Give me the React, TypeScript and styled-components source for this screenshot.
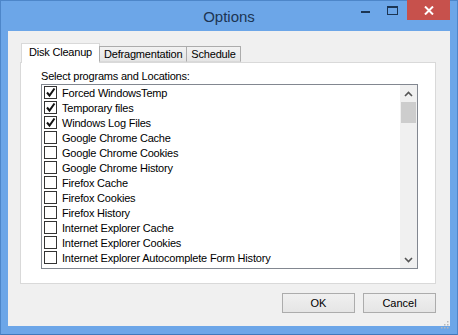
import styled, { createGlobalStyle } from "styled-components";

const GlobalStyle = createGlobalStyle`
  html, body {
    margin: 0;
    padding: 0;
    overflow: hidden;
    background: #6ca6e8;
  }
  * {
    box-sizing: border-box;
  }
`;

const items = [
  { label: "Forced WindowsTemp", checked: true },
  { label: "Temporary files", checked: true },
  { label: "Windows Log Files", checked: true },
  { label: "Google Chrome Cache", checked: false },
  { label: "Google Chrome Cookies", checked: false },
  { label: "Google Chrome History", checked: false },
  { label: "Firefox Cache", checked: false },
  { label: "Firefox Cookies", checked: false },
  { label: "Firefox History", checked: false },
  { label: "Internet Explorer Cache", checked: false },
  { label: "Internet Explorer Cookies", checked: false },
  { label: "Internet Explorer Autocomplete Form History", checked: false },
];

const tabs = ["Disk Cleanup", "Defragmentation", "Schedule"];

const App = () => {
  return (
    <>
      <GlobalStyle />
      <Window>
        <TitleBar>
          <Title>Options</Title>
          <Controls>
            <CtrlButton>
              <svg width="10" height="10" viewBox="0 0 10 10">
                <rect x="0" y="6" width="9" height="2" fill="#1c3553" />
              </svg>
            </CtrlButton>
            <CtrlButton>
              <svg width="11" height="9" viewBox="0 0 11 9">
                <rect x="0.5" y="0.5" width="10" height="8" fill="none" stroke="#1c3553" />
                <rect x="0" y="0" width="11" height="2" fill="#1c3553" />
              </svg>
            </CtrlButton>
            <CloseButton>
              <svg width="10" height="9" viewBox="0 0 10 9">
                <path d="M1 0.5 L9 8.5 M9 0.5 L1 8.5" stroke="#fff" strokeWidth="2" />
              </svg>
            </CloseButton>
          </Controls>
        </TitleBar>
        <Client>
          <TabRow>
            {tabs.map((t, i) => (
              <Tab key={t} active={i === 0}>
                {t}
              </Tab>
            ))}
          </TabRow>
          <Panel>
            <Caption>Select programs and Locations:</Caption>
            <ListBox>
              <Rows>
                {items.map((item) => (
                  <Row key={item.label}>
                    <Check>
                      {item.checked && (
                        <svg width="11" height="11" viewBox="0 0 11 11">
                          <path
                            d="M2 5.5 L4.5 8.5 L9.5 1.5"
                            fill="none"
                            stroke="#111"
                            strokeWidth="2"
                          />
                        </svg>
                      )}
                    </Check>
                    <RowLabel>{item.label}</RowLabel>
                  </Row>
                ))}
              </Rows>
              <ScrollBar>
                <Arrow>
                  <svg width="9" height="6" viewBox="0 0 9 6">
                    <path d="M1 5 L4.5 1.5 L8 5" fill="none" stroke="#555" strokeWidth="1.6" />
                  </svg>
                </Arrow>
                <Track>
                  <Thumb />
                </Track>
                <Arrow>
                  <svg width="9" height="6" viewBox="0 0 9 6">
                    <path d="M1 1 L4.5 4.5 L8 1" fill="none" stroke="#555" strokeWidth="1.6" />
                  </svg>
                </Arrow>
              </ScrollBar>
            </ListBox>
          </Panel>
          <Footer>
            <Button>OK</Button>
            <Button>Cancel</Button>
          </Footer>
          <Grip>
            <svg width="10" height="10" viewBox="0 0 10 10">
              {[
                [8, 2],
                [8, 5],
                [5, 5],
                [8, 8],
                [5, 8],
                [2, 8],
              ].map(([x, y]) => (
                <rect key={`${x}-${y}`} x={x} y={y} width="1.5" height="1.5" fill="#b8b8b8" />
              ))}
            </svg>
          </Grip>
        </Client>
      </Window>
    </>
  );
};

// window frame
const Window = styled.div`
  width: 458px;
  height: 335px;
  background: #6ca6e8;
  border: 1px solid #4d86c9;
  border-bottom-color: #3f78bb;
  padding: 0 7px 8px 7px;
  display: flex;
  flex-direction: column;
  font-family: "Liberation Sans", Arial, sans-serif;
`;

const TitleBar = styled.div`
  position: relative;
  height: 30px;
  display: flex;
  align-items: center;
  justify-content: center;
`;

const Title = styled.div`
  font-size: 15px;
  color: #1c3553;
`;

const Controls = styled.div`
  position: absolute;
  top: -1px;
  right: -8px;
  display: flex;
  align-items: flex-start;
`;

const CtrlButton = styled.div`
  width: 26px;
  height: 20px;
  display: flex;
  align-items: center;
  justify-content: center;
`;

const CloseButton = styled.div`
  width: 43px;
  height: 20px;
  margin-left: 2px;
  margin-right: 8px;
  background: #c7514c;
  display: flex;
  align-items: center;
  justify-content: center;
`;

// client area
const Client = styled.div`
  position: relative;
  flex: 1;
  background: #f0f0f0;
  padding: 12px 14px 0 12px;
  display: flex;
  flex-direction: column;
`;

const TabRow = styled.div`
  display: flex;
  align-items: flex-end;
  height: 19px;
  padding-left: 1px;
  position: relative;
  z-index: 1;
`;

const Tab = styled.div<{ active?: boolean }>`
  height: ${(p) => (p.active ? "20px" : "16px")};
  margin-bottom: ${(p) => (p.active ? "-1px" : "0")};
  padding: ${(p) => (p.active ? "2px 7px 0 7px" : "1px 4px 0 4px")};
  border: 1px solid ${(p) => (p.active ? "#d9d9d9" : "#acacac")};
  border-bottom: ${(p) => (p.active ? "none" : "1px solid #d9d9d9")};
  margin-left: -1px;
  background: ${(p) => (p.active ? "#ffffff" : "linear-gradient(#f2f2f2, #e5e5e5)")};
  font-size: 11px;
  letter-spacing: -0.2px;
  color: #000;
  white-space: nowrap;
  &:first-child {
    margin-left: 0;
  }
`;

const Panel = styled.div`
  height: 222px;
  background: #ffffff;
  border: 1px solid #d9d9d9;
  padding: 6px 17px 0 20px;
`;

const Caption = styled.div`
  font-size: 11px;
  letter-spacing: -0.2px;
  height: 14px;
  line-height: 14px;
  color: #000;
`;

const ListBox = styled.div`
  margin-top: 1px;
  height: 185px;
  border: 1px solid #828790;
  display: flex;
  background: #fff;
`;

const Rows = styled.div`
  flex: 1;
  padding: 0 0 0 2px;
  overflow: hidden;
`;

const Row = styled.div`
  height: 15px;
  display: flex;
  align-items: center;
`;

const Check = styled.div`
  width: 13px;
  height: 13px;
  border: 1px solid #333;
  background: #fff;
  display: flex;
  align-items: center;
  justify-content: center;
  flex-shrink: 0;
`;

const RowLabel = styled.span`
  margin-left: 5px;
  font-size: 11px;
  letter-spacing: -0.2px;
  color: #000;
  white-space: nowrap;
`;

const ScrollBar = styled.div`
  width: 17px;
  background: #f0f0f0;
  display: flex;
  flex-direction: column;
`;

const Arrow = styled.div`
  height: 17px;
  display: flex;
  align-items: center;
  justify-content: center;
`;

const Track = styled.div`
  flex: 1;
  padding: 0 1px;
`;

const Thumb = styled.div`
  height: 21px;
  background: #cdcdcd;
`;

const Footer = styled.div`
  display: flex;
  justify-content: flex-end;
  gap: 8px;
  margin-top: 9px;
`;

const Button = styled.div`
  width: 73px;
  height: 20px;
  border: 1px solid #acacac;
  background: linear-gradient(#f0f0f0, #e5e5e5);
  display: flex;
  align-items: center;
  justify-content: center;
  font-size: 11px;
  color: #000;
`;

const Grip = styled.div`
  position: absolute;
  right: 1px;
  bottom: 1px;
  width: 10px;
  height: 10px;
`;

export default App;
